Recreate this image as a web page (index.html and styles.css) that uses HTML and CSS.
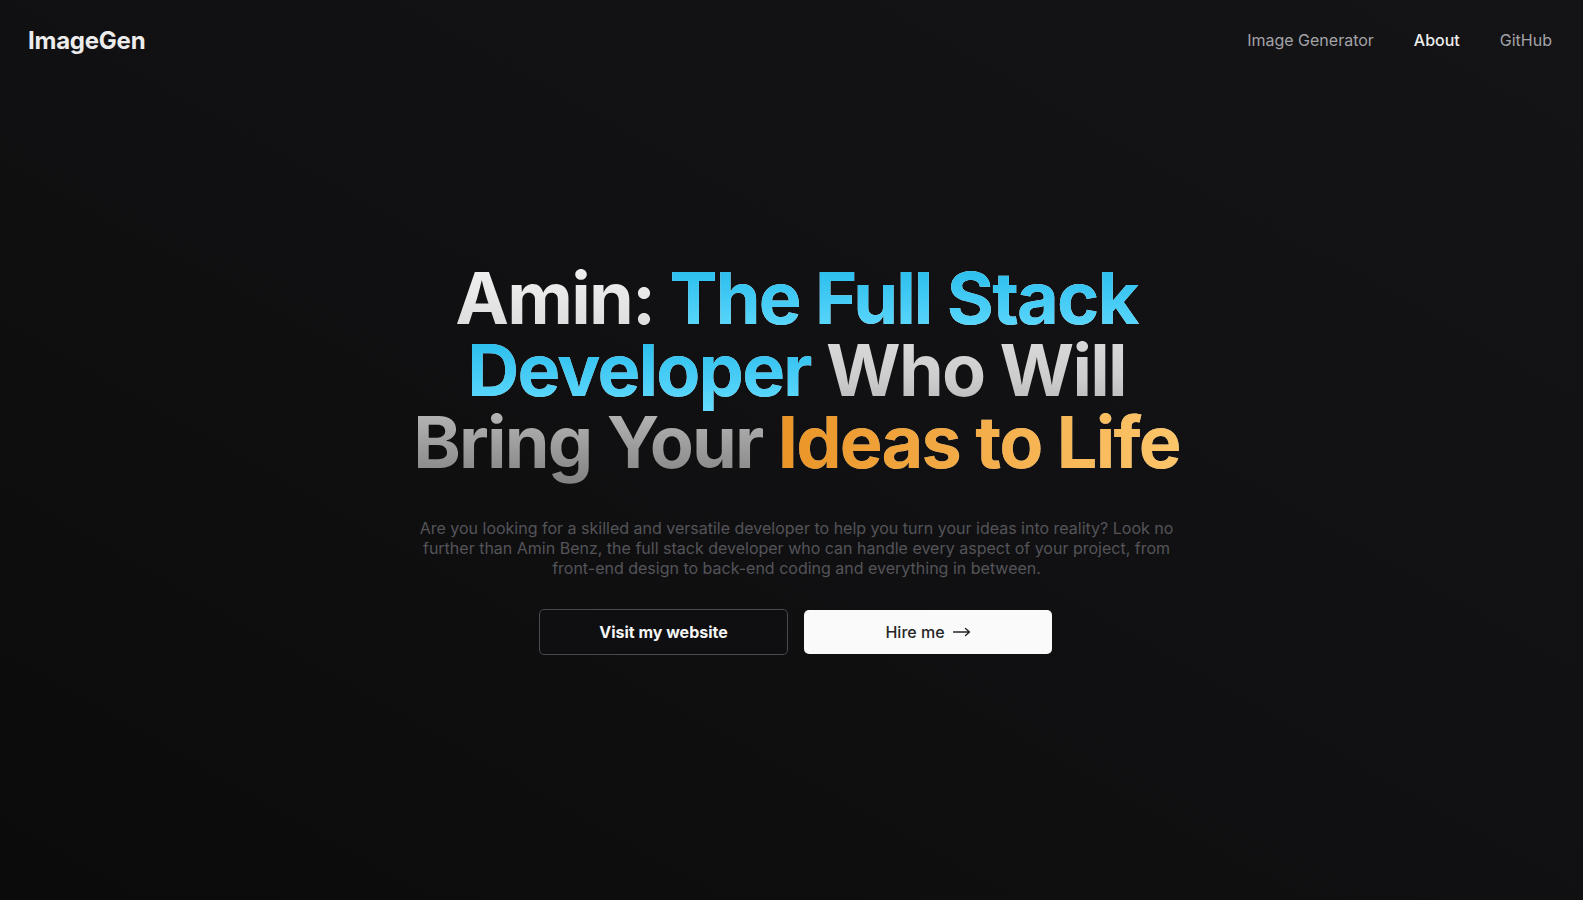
FILE: index.html
```html
<!DOCTYPE html>
<html lang="en">
<head>
<meta charset="utf-8">
<title>ImageGen</title>
<link rel="stylesheet" href="styles.css">
</head>
<body>
<div class="page">
  <header class="nav">
    <a class="brand" href="#">ImageGen</a>
    <nav class="links">
      <a class="link" href="#">Image Generator</a>
      <a class="link active" href="#">About</a>
      <a class="link" href="#">GitHub</a>
    </nav>
  </header>
  <main class="hero">
    <h1 class="title">
      <span class="grad-white">Amin: </span><span class="grad-blue">The Full Stack Developer</span><span class="grad-white"> Who Will Bring Your </span><span class="grad-orange">Ideas to Life</span>
    </h1>
    <p class="lead">Are you looking for a skilled and versatile developer to help you turn your ideas into reality? Look no further than Amin Benz, the full stack developer who can handle every aspect of your project, from front-end design to back-end coding and everything in between.</p>
    <div class="actions">
      <a class="btn btn-outline" href="#">Visit my website</a>
      <a class="btn btn-solid" href="#">Hire me <svg class="arrow" width="18" height="10" viewBox="0 0 18 10" aria-hidden="true"><path d="M0.5 5 H16.5 M12.5 1.5 L16.5 5 L12.5 8.5" fill="none" stroke="#262626" stroke-width="1.4" stroke-linecap="round" stroke-linejoin="round"/></svg></a>
    </div>
  </main>
</div>
</body>
</html>
```
FILE: styles.css
```css
* { box-sizing: border-box; }
html, body { margin: 0; padding: 0; }
body {
  font-family: Inter, "Noto Sans", sans-serif;
  background: #0e0e10;
  color: #e5e5e5;
}
.page {
  min-height: 900px;
  background: linear-gradient(to top right, #0b0b0b 0%, #111113 55%, #141416 100%);
}
.nav {
  height: 80px;
  display: flex;
  align-items: center;
  justify-content: space-between;
  padding: 0 31px 0 28px;
}
.brand {
  font-size: 24px;
  font-weight: 700;
  letter-spacing: -0.01em;
  color: #ececec;
  text-decoration: none;
}
.links {
  display: flex;
  gap: 40px;
}
.link {
  font-size: 16px;
  color: #a3a3a8;
  text-decoration: none;
}
.link.active {
  color: #ececec;
  font-weight: 500;
}
.hero {
  display: flex;
  flex-direction: column;
  align-items: center;
  padding-top: 182px;
  padding-left: 10px;
  text-align: center;
}
.title {
  margin: 0 0 -16px;
  padding-bottom: 16px;
  max-width: 800px;
  font-size: 72px;
  line-height: 72px;
  font-weight: 700;
  letter-spacing: -0.025em;
  background: linear-gradient(to bottom, #f2f2f2 0%, #cdcdcd 50%, #868686 93%, #808080 100%);
  -webkit-background-clip: text;
  background-clip: text;
  color: transparent;
}
.grad-white { color: transparent; }
.grad-blue {
  background: linear-gradient(to bottom, #1fb8ea 0%, #3ec8f3 45%, #66dcff 100%);
  -webkit-background-clip: text;
  background-clip: text;
  color: transparent;
}
.grad-orange {
  background: linear-gradient(to right, #ea9426 0%, #f5b04d 55%, #fcc56a 100%);
  -webkit-background-clip: text;
  background-clip: text;
  color: transparent;
}
.lead {
  margin: 40px 0 0;
  max-width: 768px;
  font-size: 16px;
  line-height: 20px;
  color: #545459;
}
.actions {
  margin-top: 31px;
  display: flex;
  gap: 16px;
  align-items: center;
  margin-left: -2px;
}
.btn {
  width: 248px;
  height: 44px;
  display: flex;
  align-items: center;
  justify-content: center;
  border-radius: 5px;
  font-size: 16px;
  text-decoration: none;
}
.btn-outline {
  height: 46px;
  width: 249px;
  border: 1px solid #4a4a4e;
  color: #f5f5f5;
  font-weight: 700;
  background: #0f0f11;
}
.btn-solid {
  background: #fafafa;
  color: #262626;
  font-weight: 500;
}
.arrow {
  margin-left: 8px;
  display: block;
}
```
